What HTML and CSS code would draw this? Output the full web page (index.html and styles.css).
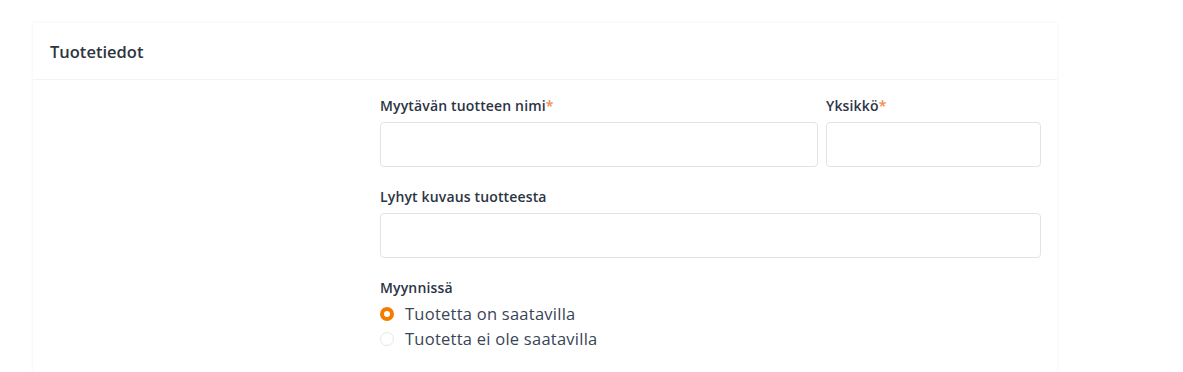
FILE: index.html
```html
<!DOCTYPE html>
<html lang="fi">
<head>
<meta charset="utf-8">
<link rel="stylesheet" href="styles.css">
</head>
<body>
<div class="card">
  <div class="card-header">Tuotetiedot</div>
  <div class="card-body">
    <div class="aside"></div>
    <div class="form">
      <div class="row two">
        <div class="field">
          <label class="label">Myytävän tuotteen nimi<span class="req">*</span></label>
          <div class="input"></div>
        </div>
        <div class="field">
          <label class="label">Yksikkö<span class="req">*</span></label>
          <div class="input"></div>
        </div>
      </div>
      <div class="field">
        <label class="label">Lyhyt kuvaus tuotteesta</label>
        <div class="input"></div>
      </div>
      <div class="field radios">
        <label class="label">Myynnissä</label>
        <div class="radio"><span class="dot on"></span><span>Tuotetta on saatavilla</span></div>
        <div class="radio"><span class="dot"></span><span>Tuotetta ei ole saatavilla</span></div>
      </div>
    </div>
  </div>
</div>
</body>
</html>
```
FILE: styles.css
```css
* { box-sizing: border-box; }
html, body { margin: 0; padding: 0; background: #fff; }
body {
  font-family: "Open Sans", "Liberation Sans", sans-serif;
  color: #2b3444;
  padding: 23px 0 0 33px;
}
.card {
  width: 1024px;
  height: 349px;
  background: #fff;
  box-shadow: 0 0 4px rgba(0,0,0,0.06);
}
.card-header {
  height: 57px;
  padding: 0 17px;
  display: flex;
  align-items: center;
  font-size: 16.5px;
  font-weight: 600;
  color: #2e3540;
  border-bottom: 1px solid #f3f3f3;
}
.card-body {
  display: grid;
  grid-template-columns: 330px 661px;
  padding: 17px 16px 0 17px;
}
.form {
  display: flex;
  flex-direction: column;
  gap: 21px;
}
.row.two {
  display: grid;
  grid-template-columns: 438px 215px;
  gap: 8px;
}
.field {
  display: flex;
  flex-direction: column;
  gap: 7px;
}
.label {
  font-size: 14px;
  font-weight: 600;
  line-height: 18px;
  color: #2b3444;
  letter-spacing: 0.15px;
}
.req { color: #f58a4b; }
.input {
  height: 45px;
  border: 1px solid #e3e3e3;
  border-radius: 4px;
  background: #fff;
}
.radios { gap: 0; }
.radios .label { margin-bottom: 4px; }
.radio {
  display: flex;
  align-items: center;
  gap: 11px;
  height: 25px;
  font-size: 16.5px;
  letter-spacing: 0.25px;
  color: #3a4556;
}
.dot {
  width: 14px;
  height: 14px;
  border-radius: 50%;
  border: 1px solid #e6e6e6;
  background: #fff;
}
.dot.on {
  border: 4px solid #f57c00;
}
```
